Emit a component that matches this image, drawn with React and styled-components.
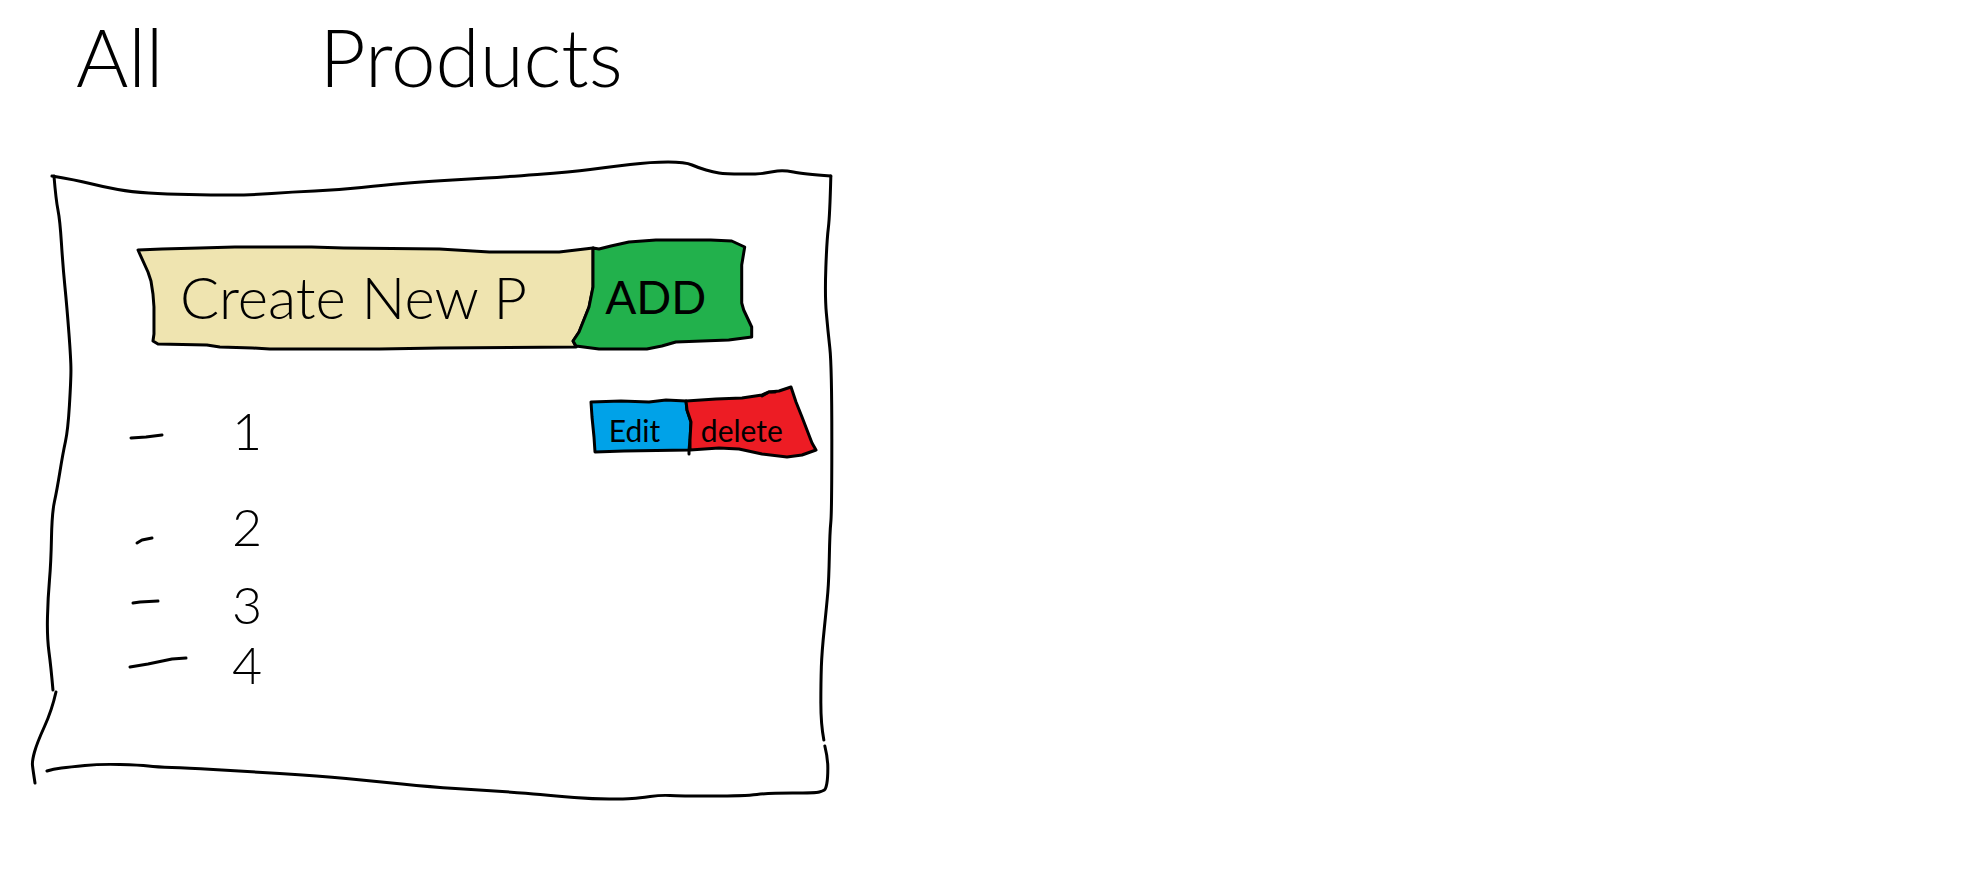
import React from "react";
import styled, { createGlobalStyle } from "styled-components";

const GlobalStyle = createGlobalStyle`
  *, *::before, *::after { box-sizing: border-box; }
  body {
    margin: 0;
    background: #fff;
    color: #000;
    font-family: Lato, "Open Sans", sans-serif;
    font-weight: 300;
  }
`;

const Page = styled.main`
  display: grid;
  grid-template-columns: minmax(640px, 5fr) 7fr;
  row-gap: 56px;
  padding: 8px 32px;
`;

const Title = styled.h1`
  grid-column: 1 / -1;
  display: flex;
  gap: 156px;
  margin: 0;
  padding-left: 44px;
  font-size: 80px;
  font-weight: 300;
  line-height: 96px;
`;

const Panel = styled.section`
  position: relative;
  display: flex;
  flex-direction: column;
  gap: 32px;
  padding: 78px 0 106px;
`;

/* Hand-drawn outline that stretches with the box it decorates. */
const Outline = styled.svg`
  position: absolute;
  inset: 0;
  width: 100%;
  height: 100%;
  overflow: visible;
  pointer-events: none;
  fill: ${(p) => p.$fill || "none"};
  stroke: #000;
  stroke-width: 3px;
  stroke-linecap: round;
  stroke-linejoin: round;

  & > * { vector-effect: non-scaling-stroke; }
`;

const CreateForm = styled.form`
  display: grid;
  grid-template-columns: 8fr 3fr;
  height: 112px;
  margin: 0 80px 0 106px;
`;

const Field = styled.label`
  position: relative;
  display: flex;
`;

const TextInput = styled.input`
  position: relative;
  width: 100%;
  padding: 4px 16px 0 42px;
  border: 0;
  outline-offset: -8px;
  background: transparent;
  color: #000;
  font: inherit;
  font-size: 58px;

  &::placeholder { color: #000; opacity: 1; }
`;

const SketchButton = styled.button`
  position: relative;
  display: flex;
  align-items: center;
  min-width: ${(p) => p.$minWidth || "0"};
  padding: ${(p) => p.$padding};
  border: 0;
  background: transparent;
  color: #000;
  font: inherit;
  font-size: ${(p) => p.$size};
  font-weight: 400;
  cursor: pointer;
`;

const ButtonText = styled.span`
  position: relative;
`;

const ProductList = styled.ul`
  margin: 0;
  padding: 0 16px 0 96px;
  list-style: none;
`;

const ProductRow = styled.li`
  display: grid;
  grid-template-columns: 64px 1fr auto;
  column-gap: 40px;
  align-items: center;
  height: ${(p) => (p.$tall ? "96px" : "60px")};
`;

const Marker = styled.svg`
  width: 64px;
  height: 40px;
  fill: none;
  stroke: #000;
  stroke-width: 3px;
  stroke-linecap: round;
  stroke-linejoin: round;
`;

const ProductName = styled.span`
  font-size: 52px;
  line-height: 56px;
`;

const Actions = styled.div`
  display: flex;
  align-self: start;
  height: 72px;
  margin-top: 4px;
`;

/* Turns "x,y x,y ..." into a path that bends softly at every inner point. */
function softPath(points) {
  const p = points.split(" ").map((pair) => pair.split(",").map(Number));
  let d = `M${p[0]}`;
  for (let i = 1; i < p.length - 1; i += 1) {
    const last = i === p.length - 2;
    const end = last ? p[i + 1] : [(p[i][0] + p[i + 1][0]) / 2, (p[i][1] + p[i + 1][1]) / 2];
    d += ` Q${p[i]} ${end}`;
  }
  return d;
}

function Sketch({ box, fill, children }) {
  return (
    <Outline viewBox={box} preserveAspectRatio="none" $fill={fill} aria-hidden="true">
      {children}
    </Outline>
  );
}

const PANEL_STROKES = [
  "52,176 76,180 104,187 132,192 166,194 212,195 252,195 292,192 338,190 386,185 420,182 470,179 504,177 572,172 610,167 652,162 686,162 700,168 714,172 726,174 760,174 772,172 785,170 804,174 832,176",
  "832,176 831,216 828,240 826,296 829,330 833,366 833,512 831,532 830,580 828,604 823,652 822,682 822,724 825,740",
  "826,746 829,758 829,778 827,789 824,791 817,793 770,793 746,796 680,796 662,795 640,798 626,799 594,799 556,796 526,793 480,790 432,787 373,781 320,776 240,771 187,768 157,767 140,765 100,764 70,767 53,769 47,771",
  "54,176 56,200 60,220 63,267 67,307 71,360 71,380 68,430 63,453 57,490 52,513 51,563 48,597 47,637 51,667 53,690",
  "56,692 52,710 37,743 32,761 33,770 35,783",
];

function PanelOutline() {
  return (
    <Sketch box="32 160 802 640">
      {PANEL_STROKES.map((points) => (
        <path key={points} d={softPath(points)} />
      ))}
    </Sketch>
  );
}

const MARKS = [
  "3,28 18,27 34,25",
  "9,37 14,34 24,32",
  "5,19 12,18 30,17",
  "2,23 20,20 44,15 58,14",
];

function RowActions() {
  return (
    <Actions>
      <SketchButton type="button" $minWidth="100px" $size="30px" $padding="16px 16px 0 20px">
        <Sketch box="590 386 100 72" fill="#00a2e8">
          <polygon points="592,402 622,401 650,402 667,400 687,401 688,410 692,422 691,440 690,450 625,451 596,452 595,437 593,417" />
          <polyline points="690,450 690,454" />
        </Sketch>
        <ButtonText>Edit</ButtonText>
      </SketchButton>
      <SketchButton type="button" $minWidth="128px" $size="30px" $padding="16px 16px 0 12px">
        <Sketch box="690 386 128 72" fill="#ed1c24">
          <polygon points="687,401 717,399 743,398 763,395 770,392 780,391 792,387 797,402 803,417 813,443 817,450 803,455 788,457 763,454 740,449 720,448 691,450 691,440 692,422 688,410" />
          <polyline points="763,396 770,392 776,392" />
        </Sketch>
        <ButtonText>delete</ButtonText>
      </SketchButton>
    </Actions>
  );
}

export default function App() {
  return (
    <>
      <GlobalStyle />
      <Page>
        <Title>
          <span>All </span>
          <span>Products</span>
        </Title>
        <Panel>
          <PanelOutline />
          <CreateForm onSubmit={(e) => e.preventDefault()}>
            <Field>
              <Sketch box="138 238 448 112" fill="#efe4b0">
                <polygon points="138,250 162,249 200,248 235,247 312,247 344,248 440,249 490,252 560,252 594,248 594,287 590,307 580,332 574,341 577,347 440,348 380,349 270,349 253,348 220,347 207,345 158,344 153,341 154,334 154,307 153,294 151,281 148,272" />
              </Sketch>
              <TextInput type="text" aria-label="New product name" placeholder="Create New P" />
            </Field>
            <SketchButton type="submit" $size="46px" $padding="4px 16px 0 20px">
              <Sketch box="586 238 168 112" fill="#22b14c">
                <polygon points="594,248 600,249 612,246 630,242 657,240 712,240 733,241 746,247 743,265 743,303 745,310 753,327 753,337 730,340 677,342 663,346 648,349 600,349 577,346 574,341 580,332 590,307 594,287" />
              </Sketch>
              <ButtonText>ADD</ButtonText>
            </SketchButton>
          </CreateForm>
          <ProductList>
            {MARKS.map((points, i) => (
              <ProductRow key={points} $tall={i < 2}>
                <Marker viewBox="0 0 64 40" aria-hidden="true">
                  <polyline points={points} />
                </Marker>
                <ProductName>{i + 1}</ProductName>
                {i === 0 && <RowActions />}
              </ProductRow>
            ))}
          </ProductList>
        </Panel>
      </Page>
    </>
  );
}
